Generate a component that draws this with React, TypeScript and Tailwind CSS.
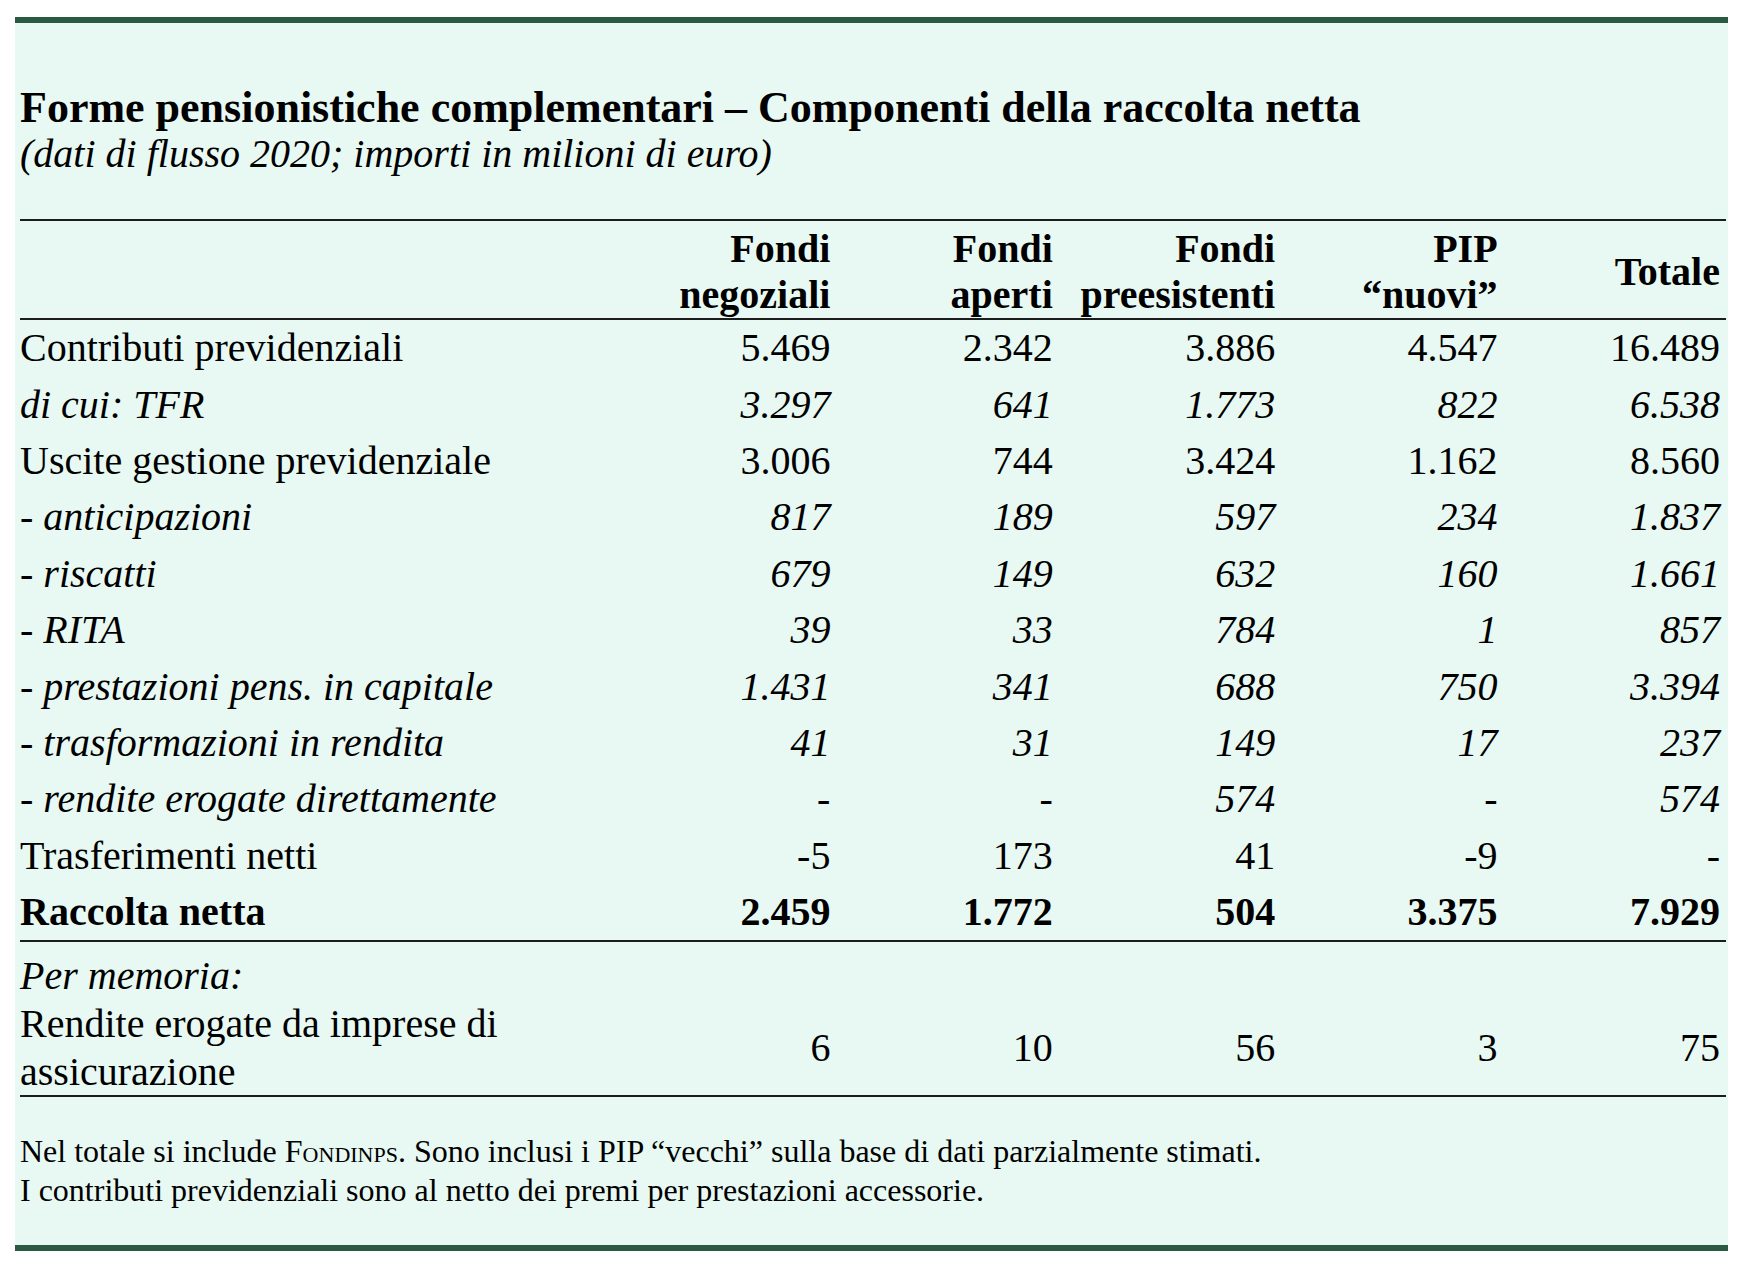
import React from "react";

type Row = {
  label: string;
  values: string[];
  style?: "italic" | "bold";
};

const rows: Row[] = [
  { label: "Contributi previdenziali", values: ["5.469", "2.342", "3.886", "4.547", "16.489"] },
  { label: "di cui: TFR", values: ["3.297", "641", "1.773", "822", "6.538"], style: "italic" },
  { label: "Uscite gestione previdenziale", values: ["3.006", "744", "3.424", "1.162", "8.560"] },
  { label: "- anticipazioni", values: ["817", "189", "597", "234", "1.837"], style: "italic" },
  { label: "- riscatti", values: ["679", "149", "632", "160", "1.661"], style: "italic" },
  { label: "- RITA", values: ["39", "33", "784", "1", "857"], style: "italic" },
  { label: "- prestazioni pens. in capitale", values: ["1.431", "341", "688", "750", "3.394"], style: "italic" },
  { label: "- trasformazioni in rendita", values: ["41", "31", "149", "17", "237"], style: "italic" },
  { label: "- rendite erogate direttamente", values: ["-", "-", "574", "-", "574"], style: "italic" },
  { label: "Trasferimenti netti", values: ["-5", "173", "41", "-9", "-"] },
  { label: "Raccolta netta", values: ["2.459", "1.772", "504", "3.375", "7.929"], style: "bold" },
];

const grid = "grid grid-cols-[594px_repeat(5,1fr)]";

export default function App() {
  return (
    <div className="min-h-[1270px] w-[1746px] bg-white pt-[17px] pl-[15px] font-['Liberation_Serif','Times_New_Roman',serif] text-black">
      <div className="w-[1713px] border-t-[6px] border-b-[6px] border-[#2b5a43] bg-[#e8f8f2]">
        <div className="pl-[5px] pr-[2px] pt-[61px]">
          {/* title */}
          <h1 className="text-[44px] font-bold leading-[48px]">
            Forme pensionistiche complementari – Componenti della raccolta netta
          </h1>
          <p className="text-[40px] italic leading-[44px]">
            (dati di flusso 2020; importi in milioni di euro)
          </p>

          {/* table */}
          <div className="mt-[43px] w-[1706px] text-[40px]">
            <div className={`${grid} border-t-2 border-b-2 border-[#1c1c1c] pt-[5px] font-bold leading-[46px]`}>
              <div />
              <div className="pr-[6px] text-right">Fondi<br />negoziali</div>
              <div className="pr-[6px] text-right">Fondi<br />aperti</div>
              <div className="pr-[6px] text-right">Fondi<br />preesistenti</div>
              <div className="pr-[6px] text-right">PIP<br />“nuovi”</div>
              <div className="self-center pr-[6px] text-right">Totale</div>
            </div>

            <div className="border-b-2 border-[#1c1c1c]">
              {rows.map((r) => (
                <div
                  key={r.label}
                  className={`${grid} h-[56.4px] items-center leading-[46px] ${
                    r.style === "italic" ? "italic" : r.style === "bold" ? "font-bold" : ""
                  }`}
                >
                  <div className="whitespace-nowrap">{r.label}</div>
                  {r.values.map((v, i) => (
                    <div key={i} className="pr-[6px] text-right">
                      {v}
                    </div>
                  ))}
                </div>
              ))}
            </div>

            <div className="border-b-2 border-[#1c1c1c]">
              <div className="pt-[9px] italic leading-[49px]">Per memoria:</div>
              <div className={`${grid} items-center leading-[47.5px]`}>
                <div className="pr-[90px]">Rendite erogate da imprese di assicurazione</div>
                {["6", "10", "56", "3", "75"].map((v, i) => (
                  <div key={i} className="pr-[6px] text-right">
                    {v}
                  </div>
                ))}
              </div>
            </div>
          </div>

          {/* notes */}
          <div className="mt-[35px] pb-[35px] text-[32px] leading-[39px]">
            <p>
              Nel totale si include <span className="[font-variant-caps:small-caps]">Fondinps</span>. Sono
              inclusi i PIP “vecchi” sulla base di dati parzialmente stimati.
            </p>
            <p>I contributi previdenziali sono al netto dei premi per prestazioni accessorie.</p>
          </div>
        </div>
      </div>
    </div>
  );
}
